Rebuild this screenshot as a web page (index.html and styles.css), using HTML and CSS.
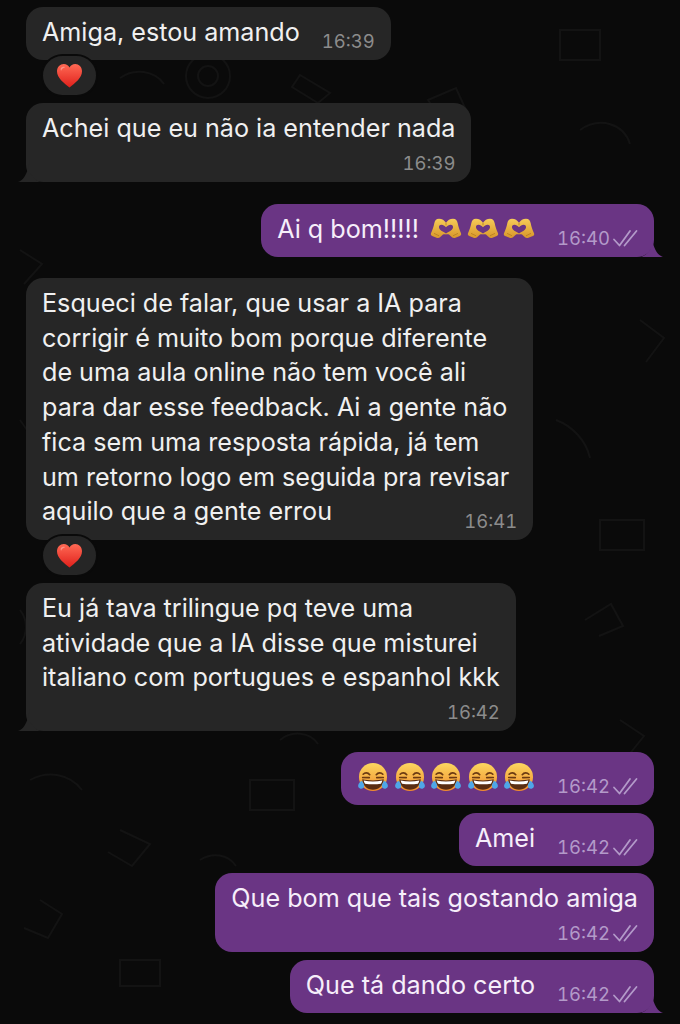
FILE: index.html
```html
<!DOCTYPE html>
<html lang="pt-BR">
<head>
    <meta charset="UTF-8">
    <meta name="viewport" content="width=device-width, initial-scale=1.0">
    <title>Conversa</title>
    <link rel="stylesheet" href="styles.css">
</head>
<body>

    <!-- shared drawings -->
    <svg class="defs" width="0" height="0">
        <defs>
            <linearGradient id="heartFill" x1="0" y1="0" x2="0" y2="1">
                <stop offset="0" stop-color="#ff6a55"/>
                <stop offset="1" stop-color="#e0201b"/>
            </linearGradient>
            <linearGradient id="faceFill" x1="0" y1="0" x2="0" y2="1">
                <stop offset="0" stop-color="#fcd860"/>
                <stop offset="1" stop-color="#f08a2c"/>
            </linearGradient>
            <linearGradient id="handFill" x1="0" y1="0" x2="0" y2="1">
                <stop offset="0" stop-color="#f6cc58"/>
                <stop offset="1" stop-color="#d8962a"/>
            </linearGradient>
            <symbol id="heart" viewBox="0 0 28 26">
                <path fill="url(#heartFill)" d="M14 25.5C8 20.5 1 15.5 1 8.500C1 4 4.300 1 8 1c2.700 0 4.800 1.300 6 3.600C15.200 2.300 17.300 1 20 1c3.700 0 7 3 7 7.500 0 7-7 12-13 17z"/>
                <path fill="#fff" opacity=".35" d="M5 5.500C6 4 8 3.500 9.500 4.300 7.500 4.800 6 6 5.300 8 4.800 7.500 4.600 6.300 5 5.500z"/>
            </symbol>
            <symbol id="hands" viewBox="0 0 32 26" preserveAspectRatio="none">
                <path fill="url(#handFill)" d="M16 6C14.500 3 12 1 9 1 6 1 4.800 3.500 4.300 6.500 3.700 10.500 2.500 14.500 1 19c-.6 1.800.2 3 1.800 3.600l3.700 1.900c1.600.6 3 .2 3.800-1L13 20.500c1.200-.6 2.200-.6 3 0 .8-.6 1.800-.6 3 0l2.700 3c.8 1.200 2.200 1.600 3.800 1l3.700-1.900c1.600-.6 2.400-1.800 1.800-3.600C29.500 14.500 28.300 10.500 27.700 6.500 27.200 3.500 26 1 23 1 20 1 17.500 3 16 6z"/>
                <path fill="#6a3584" d="M16 11.500c-1.300-2-3-3.200-4.500-3.200-1.800 0-2.800 1.500-2.500 3.400.3 2 1.700 3.800 3.700 4.900 1.300.7 2.400 1.500 3.300 2.500.9-1 2-1.800 3.300-2.500 2-1.100 3.400-2.900 3.700-4.900.3-1.900-.7-3.400-2.500-3.400-1.500 0-3.200 1.200-4.500 3.200z"/>
                <path fill="none" stroke="#b57e20" stroke-width=".9" d="M16 6v3M4 19l5 3M28 19l-5 3"/>
            </symbol>
            <symbol id="laugh" viewBox="0 0 34 31">
                <circle cx="17" cy="15" r="15" fill="url(#faceFill)"/>
                <path fill="none" stroke="#6b3a12" stroke-width="1.800" stroke-linecap="round" d="M6.500 12c1.800-1.900 5-2 7 .5M27.500 12c-1.800-1.900-5-2-7 .5M6 15.500l7 .2M28 15.500l-7 .2"/>
                <path fill="#5a2d12" d="M5.500 17.500c7 1.600 16 1.600 23 0C28 25 23 28.500 17 28.500S6 25 5.500 17.500z"/>
                <path fill="#fff" d="M7 18.800c6.500 1.200 13.500 1.200 20 0-.3 1.400-.8 2.500-1.500 3.400-5.400.8-11.600.8-17 0-.7-.9-1.200-2-1.500-3.400z"/>
                <path fill="#4fa6e8" d="M4.800 19c1.300 1.300 3 3.700 2.800 5.800-.2 2-2.200 3-4 2.600-2-.5-3-2.200-2.300-4.100C1.900 21.500 3.300 20 4.800 19zM29.200 19c-1.300 1.300-3 3.700-2.800 5.800.2 2 2.200 3 4 2.600 2-.5 3-2.200 2.300-4.100C32.100 21.500 30.700 20 29.200 19z"/>
            </symbol>
            <symbol id="ticks" viewBox="0 0 26 18">
                <path fill="none" stroke="currentColor" stroke-width="1.800" stroke-linecap="round" stroke-linejoin="round" d="M2 10.500l5.500 6L18 2M12.500 16.500L24.500 2"/>
            </symbol>
            <symbol id="tail-left" viewBox="0 0 22 22">
                <path d="M12 0v13c2 3.500 5 7 10 9H0c5-2 9-6 12-22z" fill="#262626"/>
            </symbol>
            <symbol id="tail-right" viewBox="0 0 22 22">
                <path d="M10 0v13C8 17 5 20 0 22h22C17 20 13 16 10 0z" fill="#6a3584"/>
            </symbol>
        </defs>
    </svg>

    <!-- faint wallpaper doodles -->
    <svg class="wallpaper" viewBox="0 0 680 1024">
        <g fill="none" stroke="#131313" stroke-width="2">
            <circle cx="208" cy="76" r="22"/>
            <circle cx="208" cy="76" r="10"/>
            <path d="M300 75l30 18-12 10-26-16zM120 78c14-10 34-8 44 6M428 100l28-12 10 22-26 8z"/>
            <path d="M560 30h40v30h-40zM580 130c20-14 44-6 50 14M20 250l22 14-18 20M640 320l24 18-18 24"/>
            <path d="M556 420c16 6 30 20 34 38M600 520h44v30h-44zM585 620l26-16 12 22-24 10"/>
            <path d="M30 780c18-10 40-6 52 10M120 830l30 14-18 22-24-14M250 780h44v30h-44zM200 860c12-8 28-6 36 6"/>
            <path d="M120 960h40v26h-40zM40 900l22 14-14 24-24-10M460 760l24 12-10 22M620 720l24 16-16 20"/>
            <path d="M280 740c12-10 30-8 38 4M20 420l14 20M20 610c8 10 8 24 0 34"/>
        </g>
    </svg>

    <div class="chat">
        <div class="bubble in">
            <div class="row">
                <p class="text">Amiga, estou amando</p>
                <span class="meta">16:39</span>
            </div>
        </div>
        <div class="reaction"><svg class="heart"><use href="#heart"/></svg></div>

        <div class="bubble in tail after-reaction">
            <p class="text">Achei que eu não ia entender nada</p>
            <div class="meta below">16:39</div>
            <svg class="tail-l"><use href="#tail-left"/></svg>
        </div>

        <div class="bubble out tail msg-3">
            <div class="row">
                <p class="text">Ai q bom!!!!! <span class="emojis"><svg class="hands"><use href="#hands"/></svg><svg class="hands"><use href="#hands"/></svg><svg class="hands"><use href="#hands"/></svg></span></p>
                <span class="meta">16:40 <svg class="ticks"><use href="#ticks"/></svg></span>
            </div>
            <svg class="tail-r"><use href="#tail-right"/></svg>
        </div>

        <div class="bubble in long msg-4">
            <p class="text">Esqueci de falar, que usar a IA para<br>corrigir é muito bom porque diferente<br>de uma aula online não tem você ali<br>para dar esse feedback. Ai a gente não<br>fica sem uma resposta rápida, já tem<br>um retorno logo em seguida pra revisar<br>aquilo que a gente errou</p>
            <div class="meta overlap">16:41</div>
        </div>
        <div class="reaction"><svg class="heart"><use href="#heart"/></svg></div>

        <div class="bubble in tail after-reaction">
            <p class="text">Eu já tava trilingue pq teve uma<br>atividade que a IA disse que misturei<br>italiano com portugues e espanhol kkk</p>
            <div class="meta below">16:42</div>
            <svg class="tail-l"><use href="#tail-left"/></svg>
        </div>

        <div class="bubble out msg-6">
            <div class="row">
                <p class="text emojis-only"><svg class="laugh"><use href="#laugh"/></svg><svg class="laugh"><use href="#laugh"/></svg><svg class="laugh"><use href="#laugh"/></svg><svg class="laugh"><use href="#laugh"/></svg><svg class="laugh"><use href="#laugh"/></svg></p>
                <span class="meta">16:42 <svg class="ticks"><use href="#ticks"/></svg></span>
            </div>
        </div>

        <div class="bubble out msg-7">
            <div class="row">
                <p class="text">Amei</p>
                <span class="meta">16:42 <svg class="ticks"><use href="#ticks"/></svg></span>
            </div>
        </div>

        <div class="bubble out msg-8">
            <p class="text">Que bom que tais gostando amiga</p>
            <div class="meta below">16:42 <svg class="ticks"><use href="#ticks"/></svg></div>
        </div>

        <div class="bubble out tail msg-9">
            <div class="row">
                <p class="text">Que tá dando certo</p>
                <span class="meta">16:42 <svg class="ticks"><use href="#ticks"/></svg></span>
            </div>
            <svg class="tail-r"><use href="#tail-right"/></svg>
        </div>
    </div>

</body>
</html>
```

FILE: styles.css
```css
* {
    margin: 0;
    padding: 0;
    box-sizing: border-box;
}
html, body {
    height: 100%;
}
body {
    position: relative;
    overflow: hidden;
    background-color: #0a0a0a;
    font-family: Inter, "Liberation Sans", sans-serif;
}
.defs {
    position: absolute;
}
.wallpaper {
    position: absolute;
    top: 0;
    left: 0;
    width: 680px;
    height: 1024px;
}
.chat {
    position: relative;
    display: flex;
    flex-direction: column;
    align-items: flex-start;
    padding: 7px 26px 0;
}
.bubble {
    position: relative;
    padding: 8px 16px 7px;
    border-radius: 17px;
}
.bubble.in {
    background-color: #262626;
    color: #f0f0f0;
}
.bubble.out {
    align-self: flex-end;
    background-color: #6a3584;
    color: #f6eefa;
}
.row {
    display: flex;
    align-items: flex-end;
    gap: 22px;
}
.text {
    font-size: 25.15px;
    line-height: 34.7px;
    white-space: nowrap;
}
.row .text {
    line-height: 35px;
    margin-bottom: 3px;
}
.meta {
    display: flex;
    align-items: center;
    justify-content: flex-end;
    gap: 2px;
    height: 24px;
    font-size: 18.5px;
    font-variant-numeric: tabular-nums;
    white-space: nowrap;
}
.in .meta {
    color: #8c8c8c;
}
.out .meta {
    color: #b39ac9;
}
.below {
    margin-top: 5.3px;
}
.overlap {
    margin-top: -24px;
}
.long {
    padding-bottom: 7px;
}
.long .text {
    margin-bottom: 4px;
    padding-right: 8px;
}
.ticks {
    width: 26px;
    height: 18px;
}
.tail-l {
    position: absolute;
    left: -8px;
    bottom: 0;
    width: 22px;
    height: 22px;
}
.tail-r {
    position: absolute;
    right: -9px;
    bottom: 0;
    width: 22px;
    height: 22px;
}
.reaction {
    position: relative;
    display: flex;
    align-items: center;
    justify-content: center;
    width: 53px;
    height: 39px;
    margin: -4px 0 0 17px;
    background-color: #262626;
    border-radius: 20px;
    box-shadow: 0 0 0 2px #0a0a0a;
}
.heart {
    width: 27px;
    height: 25px;
}
.after-reaction {
    margin-top: 8px;
}
.msg-3 {
    margin-top: 22px;
}
.msg-4 {
    margin-top: 21px;
}
.msg-6 {
    margin-top: 21px;
}
.msg-7 {
    margin-top: 8px;
}
.msg-8 {
    margin-top: 7px;
}
.msg-9 {
    margin-top: 8px;
}
.emojis {
    display: inline-flex;
    align-items: center;
    gap: 4.5px;
    margin-left: 4px;
    vertical-align: -1px;
}
.hands {
    width: 32px;
    height: 21px;
}
.emojis-only {
    display: flex;
    align-items: center;
    gap: 4.5px;
    height: 35px;
}
.laugh {
    width: 32px;
    height: 29px;
}
```
